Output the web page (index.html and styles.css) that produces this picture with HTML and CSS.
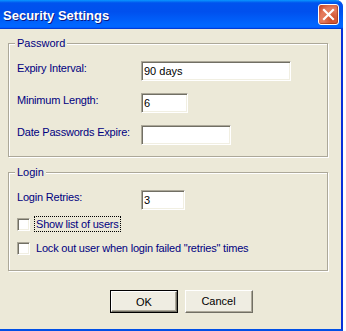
FILE: index.html
```html
<!DOCTYPE html>
<html>
<head>
<meta charset="utf-8">
<link rel="stylesheet" href="styles.css">
</head>
<body>
<div class="window">
  <div class="titlebar">
    <span class="title">Security Settings</span>
    <span class="close">
      <svg width="13" height="13" viewBox="0 0 13 13"><path d="M2 2 L11 11 M11 2 L2 11" stroke="#fff" stroke-width="2.2" stroke-linecap="square"/></svg>
    </span>
  </div>
  <div class="content">
    <div class="group group-password">
      <span class="legend">Password</span>
      <div class="row">
        <span class="label">Expiry Interval:</span>
        <span class="field w150">90 days</span>
      </div>
      <div class="row">
        <span class="label">Minimum Length:</span>
        <span class="field w47">6</span>
      </div>
      <div class="row row-last">
        <span class="label">Date Passwords Expire:</span>
        <span class="field w90"></span>
      </div>
    </div>
    <div class="group group-login">
      <span class="legend">Login</span>
      <div class="row">
        <span class="label">Login Retries:</span>
        <span class="field w44">3</span>
      </div>
      <div class="check-row first">
        <span class="checkbox"></span>
        <span class="check-label focus">Show list of users</span>
      </div>
      <div class="check-row second">
        <span class="checkbox"></span>
        <span class="check-label">Lock out user when login failed "retries" times</span>
      </div>
    </div>
    <div class="buttons">
      <span class="btn btn-default"><span class="btn-inner">OK</span></span>
      <span class="btn"><span class="btn-inner">Cancel</span></span>
    </div>
  </div>
</div>
</body>
</html>
```
FILE: styles.css
```css
html, body {
  margin: 0;
  padding: 0;
  background: #ffffff;
}
body {
  width: 346px;
  height: 331px;
  overflow: hidden;
  font-family: "Liberation Sans", Arial, sans-serif;
}
.window {
  width: 341px;
  border-right: 2px solid #0831D9;
  border-bottom: 2px solid #0050E6;
  border-top-right-radius: 7px;
}
.titlebar {
  height: 29px;
  display: flex;
  align-items: center;
  justify-content: space-between;
  padding: 0 2px 0 3px;
  box-sizing: border-box;
  width: 343px;
  margin-right: -2px;
  border-top-right-radius: 7px;
  background: linear-gradient(#0997FF 0%, #0053EE 10%, #0050EE 40%, #0066FF 85%, #0066FF 92%, #005BFF 95%, #003DD7 97%, #003DD7 100%);
}
.title {
  color: #fff;
  font-weight: bold;
  font-size: 13px;
  text-shadow: 1px 1px 0 #0A1883;
  padding-top: 1px;
}
.close {
  width: 21px;
  height: 21px;
  box-sizing: border-box;
  border: 1px solid #fff;
  border-radius: 3px;
  margin-right: 2px;
  margin-top: -1px;
  display: flex;
  align-items: center;
  justify-content: center;
  background: radial-gradient(circle at 70% 75%, #CC4622 0%, #E37A5C 45%, #E5795B 60%, #C13A1A 100%);
  box-shadow: inset -1px -1px 1px rgba(120,20,0,0.5);
}
.content {
  height: 300px;
  background: #ECE9D8;
  padding: 14px 0 0 8px;
  box-sizing: border-box;
}
.group {
  position: relative;
  width: 320px;
  box-sizing: border-box;
  border: 1px solid #ACA899;
  box-shadow: 1px 1px 0 #fff, inset 1px 1px 0 #fff;
  padding: 17px 0 0 8px;
  color: #000080;
  font-size: 11px;
}
.group-password {
  height: 114px;
}
.group-login {
  margin-top: 15px;
  height: 99px;
}
.legend {
  position: absolute;
  top: -8px;
  left: 6px;
  padding: 0 2px;
  background: #ECE9D8;
  line-height: 14px;
  color: #000080;
}
.row {
  display: flex;
  align-items: flex-start;
  height: 20px;
  margin-bottom: 12px;
}
.row-last {
  margin-top: 1px;
}
.label {
  width: 124px;
  line-height: 14px;
  letter-spacing: -0.2px;
}
.field {
  height: 20px;
  box-sizing: border-box;
  border: 1px solid;
  border-color: #ACA899 #fff #fff #ACA899;
  box-shadow: inset 1px 1px 0 #716F64, inset -1px -1px 0 #F1EFE2;
  background: #fff;
  color: #000;
  padding: 0 2px;
  line-height: 18px;
  font-size: 11px;
}
.w150 { width: 150px; }
.w47 { width: 47px; }
.w90 { width: 90px; }
.w44 { width: 44px; }
.check-row {
  display: flex;
  align-items: center;
  height: 16px;
}
.check-row.first {
  margin-top: -6px;
}
.check-row.second {
  margin-top: 8px;
}
.checkbox {
  width: 13px;
  height: 13px;
  box-sizing: border-box;
  border: 1px solid;
  border-color: #ACA899 #fff #fff #ACA899;
  box-shadow: inset 1px 1px 0 #716F64, inset -1px -1px 0 #F1EFE2;
  background: #fff;
  margin-right: 4px;
}
.check-label {
  line-height: 14px;
  padding: 0 1px;
  border: 1px dotted transparent;
  letter-spacing: -0.2px;
}
.check-label.focus {
  border-color: #000;
}
.buttons {
  display: flex;
  gap: 7px;
  margin-top: 19px;
  padding-left: 102px;
}
.btn {
  width: 68px;
  height: 23px;
  box-sizing: border-box;
  border: 1px solid;
  border-color: #fff #716F64 #716F64 #fff;
  display: flex;
}
.btn .btn-inner {
  flex: 1;
  display: flex;
  align-items: center;
  justify-content: center;
  border-right: 1px solid #ACA899;
  border-bottom: 1px solid #ACA899;
  background: #EFEDE2;
  color: #000;
  font-size: 11px;
}
.btn-default {
  border: 1px solid #000;
}
.btn-default .btn-inner {
  border: 1px solid;
  border-color: #fff #716F64 #716F64 #fff;
  box-shadow: inset -1px -1px 0 #ACA899;
}
```
